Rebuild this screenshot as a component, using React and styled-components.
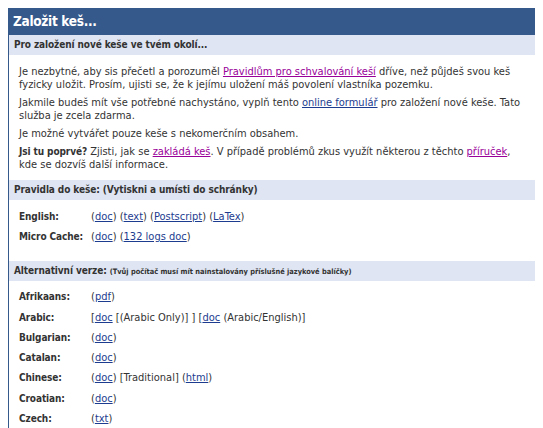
import React from "react";
import styled, { createGlobalStyle, css } from "styled-components";

const GlobalStyle = createGlobalStyle`
   body {
      margin: 8px;
      background: #ffffff;
      font-family: "DejaVu Sans Condensed", "DejaVu Sans", sans-serif;
      font-size: 11px;
      color: #333333;
   }
`

// bold text in the reference is a narrow face, so shrink it a bit
const narrowBold = css`
   font-weight: bold;
   font-size: 10px;
   letter-spacing: -0.1px;
`

const english = [
   { label: "English:", items: [["(", "doc", ")"], [" (", "text", ")"], [" (", "Postscript", ")"], [" (", "LaTex", ")"]] },
   { label: "Micro Cache:", items: [["(", "doc", ")"], [" (", "132 logs doc", ")"]] },
]

const languages = [
   { label: "Afrikaans:", items: [["(", "pdf", ")"]] },
   { label: "Arabic:", items: [["[", "doc", " [(Arabic Only)] ]"], [" [", "doc", " (Arabic/English)]"]] },
   { label: "Bulgarian:", items: [["(", "doc", ")"]] },
   { label: "Catalan:", items: [["(", "doc", ")"]] },
   { label: "Chinese:", items: [["(", "doc", ") [Traditional]"], [" (", "html", ")"]] },
   { label: "Croatian:", items: [["(", "doc", ")"]] },
   { label: "Czech:", items: [["(", "txt", ")"]] },
]

const DocTable = ({ rows }) => (
   <Table>
      {rows.map((row) => (
         <React.Fragment key={row.label}>
            <Label>{row.label}</Label>
            <Value>
               {row.items.map(([before, link, after], i) => (
                  <span key={i}>
                     {before}<DocLink href="#">{link}</DocLink>{after}
                  </span>
               ))}
            </Value>
         </React.Fragment>
      ))}
   </Table>
)

const App = () => {
   return (
      <>
         <GlobalStyle />
         <Box>
            <Title>Založit keš...</Title>
            <SectionHead>Pro založení nové keše ve tvém okolí...</SectionHead>
            <Body>
               <Para>
                  Je nezbytné, aby sis přečetl a porozuměl <TextLink href="#" $visited>Pravidlům pro schvalování keší</TextLink> dříve, než půjdeš svou keš fyzicky uložit. Prosím, ujisti se, že k jejímu uložení máš povolení vlastníka pozemku.
               </Para>
               <Para>
                  Jakmile budeš mít vše potřebné nachystáno, vyplň tento <TextLink href="#">online formulář</TextLink> pro založení nové keše. Tato služba je zcela zdarma.
               </Para>
               <Para>Je možné vytvářet pouze keše s nekomerčním obsahem.</Para>
               <Para>
                  <Strong>Jsi tu poprvé?</Strong> Zjisti, jak se <TextLink href="#" $visited>zakládá keš</TextLink>. V případě problémů zkus využít některou z těchto <TextLink href="#" $visited>příruček</TextLink>, kde se dozvíš další informace.
               </Para>
            </Body>
            <SectionHead>Pravidla do keše: (Vytiskni a umísti do schránky)</SectionHead>
            <TableBody>
               <DocTable rows={english} />
            </TableBody>
            <SectionHead>
               Alternativní verze: <Note>(Tvůj počítač musí mít nainstalovány příslušné jazykové balíčky)</Note>
            </SectionHead>
            <TableBody>
               <DocTable rows={languages} />
            </TableBody>
         </Box>
      </>
   )
}
export default App

const Box = styled.div`
   width: 528px;
   border: 1px solid #36598b;
   border-top: none;
`
const Title = styled.div`
   height: 27px;
   line-height: 27px;
   background-color: #36598b;
   color: #ffffff;
   font-weight: bold;
   font-size: 13.5px;
   letter-spacing: -0.3px;
   padding: 0 5px;
   margin: 0 -1px;
`
const SectionHead = styled.div`
   height: 20px;
   line-height: 20px;
   background-color: #dfe5f2;
   padding: 0 5px;
   color: #333333;
   white-space: nowrap;
   ${narrowBold}
`
const Note = styled.span`
   font-size: 7.4px;
   letter-spacing: 0;
`
const Body = styled.div`
   padding: 10px 10px 9px;
`
const Para = styled.p`
   margin: 0 0 5px;
   line-height: 13px;
   &:last-child {
      margin-bottom: 0;
   }
`
const Strong = styled.b`
   ${narrowBold}
`
const TextLink = styled.a`
   color: ${(p) => (p.$visited ? "#990099" : "#1d3c8f")};
   text-decoration: underline;
`
const TableBody = styled.div`
   padding: 6px 10px 14px;
`
const Table = styled.div`
   display: grid;
   grid-template-columns: 72px 1fr;
   grid-auto-rows: 20.3px;
   align-items: center;
`
const Label = styled.div`
   ${narrowBold}
`
const Value = styled.div`
   white-space: nowrap;
`
const DocLink = styled.a`
   color: #1d3c8f;
   text-decoration: underline;
`
